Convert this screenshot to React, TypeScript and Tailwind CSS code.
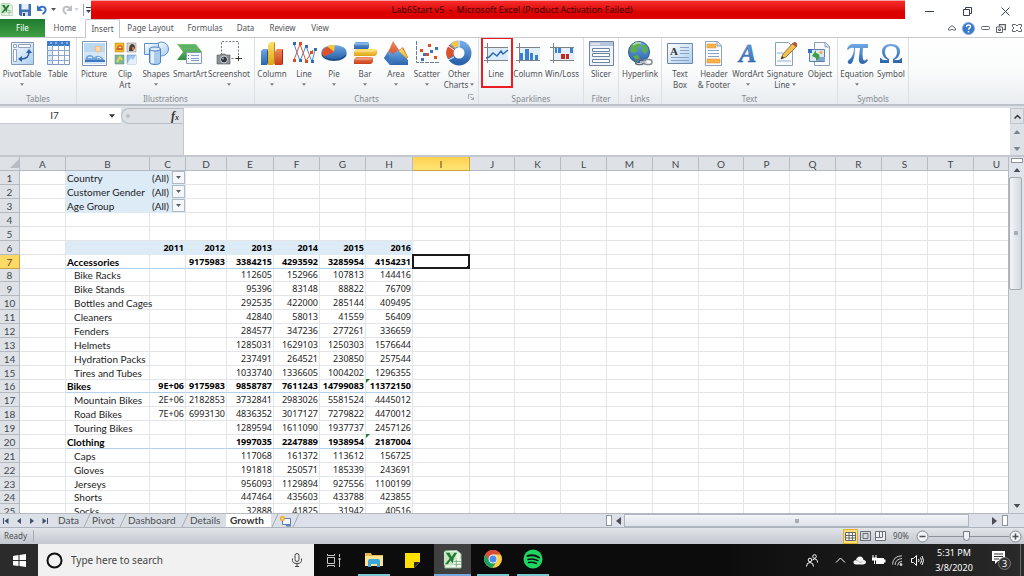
import type { ReactNode } from "react";
import clsx from "clsx";

export default function App() {
  return (
    <div className="flex h-screen min-h-96 flex-col overflow-hidden bg-white font-['Noto_Sans','Open_Sans',sans-serif] text-[8px] text-[#505357]">
      <TitleBar />
      <RibbonTabs />
      <Ribbon />
      <FormulaBar />
      <main className="flex min-h-0 flex-1">
        <div className="min-w-0 flex-1 overflow-hidden">
          <Sheet />
        </div>
        <VerticalScroll />
      </main>
      <SheetTabs />
      <StatusBar />
      <Taskbar />
    </div>
  );
}

function Gradients() {
  return (
    <svg width="0" height="0" className="absolute" aria-hidden="true">
      <defs>
        <linearGradient id="blue" x1="0" y1="0" x2="0" y2="1">
          <stop offset="0" stopColor="#6fa8e4" />
          <stop offset="1" stopColor="#2b64ab" />
        </linearGradient>
        <linearGradient id="red" x1="0" y1="0" x2="0" y2="1">
          <stop offset="0" stopColor="#f08a5e" />
          <stop offset="1" stopColor="#cb3c18" />
        </linearGradient>
        <linearGradient id="gold" x1="0" y1="0" x2="0" y2="1">
          <stop offset="0" stopColor="#ffe066" />
          <stop offset="1" stopColor="#dca416" />
        </linearGradient>
        <linearGradient id="sky" x1="0" y1="0" x2="1" y2="1">
          <stop offset="0" stopColor="#ffffff" />
          <stop offset="1" stopColor="#a9cdf0" />
        </linearGradient>
        <linearGradient id="green" x1="0" y1="0" x2="0" y2="1">
          <stop offset="0" stopColor="#7cc576" />
          <stop offset="1" stopColor="#2f8f3f" />
        </linearGradient>
      </defs>
    </svg>
  );
}

function Caret({ className }: { className?: string }) {
  return (
    <svg width="5" height="3" viewBox="0 0 5 3" className={clsx("shrink-0", className)}>
      <path d="M0 0h5L2.5 3z" fill="currentColor" />
    </svg>
  );
}

function ExcelIcon({ size }: { size: number }) {
  return (
    <svg width={size} height={size} viewBox="0 0 20 20" className="shrink-0">
      <path d="M2 1l12-1 5 4v15H2z" fill="#e9f4e8" stroke="#8cb58c" />
      <path d="M1 2h13v14H1z" fill="#c5e4c0" />
      <path d="M3 3h4l2 4 3-4h3l-4 6 4 6h-4l-3-4-3 4H2l5-6z" fill="#1f7b35" />
      <path d="M11 10h8v8h-9z" fill="#f7fbf6" />
      <path d="M11 12h8M11 15h8M14 10v8" stroke="#74ac72" />
    </svg>
  );
}

function TitleBar() {
  return (
    <header className="flex h-[19px] shrink-0 items-stretch">
      <Gradients />
      <div className="flex w-[91px] items-center">
        <ExcelIcon size={13} />
        <span className="mx-0.5 h-3 w-px bg-gray-400" />
        <button aria-label="Save" className="ml-0.5">
          <svg width="12" height="12" viewBox="0 0 12 12">
            <path d="M0 0h12v12H1.500L0 10.500z" fill="#3f72b5" />
            <path d="M2.500 0h7v5.500h-7z" fill="#e8f1fb" />
            <path d="M3 8h6v4H3z" fill="#d4dbe5" />
            <path d="M4 9h2v3H4z" fill="#2c4e80" />
          </svg>
        </button>
        <button aria-label="Undo" className="ml-1.5">
          <svg width="10" height="11" viewBox="0 0 10 11">
            <path d="M1.500 4.500C5 1 9 3 8.500 6.500Q8 9 5.500 10" fill="none" stroke="#3471c4" strokeWidth="2" />
            <path d="M0 1v6h6z" fill="#3471c4" />
          </svg>
        </button>
        <Caret className="ml-1" />
        <button aria-label="Redo" className="ml-1.5">
          <svg width="10" height="11" viewBox="0 0 10 11">
            <path d="M8.500 4.500C5 1 1 3 1.500 6.500Q2 9 4.500 10" fill="none" stroke="#bcbec1" strokeWidth="2" />
            <path d="M10 1v6H4z" fill="#bcbec1" />
          </svg>
        </button>
        <Caret className="ml-0.5 text-gray-300" />
        <span className="ml-1 h-3 w-px shrink-0 bg-gray-400" />
        <button aria-label="Customize Quick Access Toolbar" className="ml-0.5 text-gray-700">
          <svg width="5" height="6" viewBox="0 0 5 6">
            <path d="M0 0h5v1H0zM0 3h5L2.500 6z" fill="currentColor" />
          </svg>
        </button>
      </div>
      <h1 className="flex flex-1 items-center justify-center whitespace-pre border-t border-[#f5a6a6] bg-linear-to-b from-[#f82a2a] to-[#dc0000] to-60% pl-7 text-[9px] text-[#3a0505]">
        {"Lab6Start v5  -  Microsoft Excel (Product Activation Failed)"}
      </h1>
      <div className="flex w-[119px] items-center justify-between pr-3.5 pl-5 pt-1 text-gray-700">
        <button aria-label="Minimize">
          <svg width="9" height="9" viewBox="0 0 9 9">
            <path d="M0 4.500h9" stroke="currentColor" />
          </svg>
        </button>
        <button aria-label="Restore">
          <svg width="9" height="9" viewBox="0 0 9 9" fill="none" stroke="currentColor">
            <path d="M.5 2.500h6v6h-6zM2.500 2.500v-2h6v6h-2" />
          </svg>
        </button>
        <button aria-label="Close">
          <svg width="9" height="9" viewBox="0 0 9 9">
            <path d="M.5.5l8 8M8.500.5l-8 8" stroke="currentColor" />
          </svg>
        </button>
      </div>
    </header>
  );
}

const ribbonTabs = [
  { name: "Home", width: "w-10" },
  { name: "Insert", width: "w-[35px]" },
  { name: "Page Layout", width: "w-[61px]" },
  { name: "Formulas", width: "w-12" },
  { name: "Data", width: "w-[33px]" },
  { name: "Review", width: "w-[41px]" },
  { name: "View", width: "w-[34px]" },
];

function RibbonTabs() {
  return (
    <nav className="flex h-[19px] shrink-0 items-stretch border-b border-[#c9cdd2]">
      <button className="w-[45px] bg-linear-to-b from-[#1f7a30] to-[#3fa045] text-white">File</button>
      {ribbonTabs.map((tab) => (
        <button
          key={tab.name}
          className={clsx(
            tab.width,
            "whitespace-nowrap",
            tab.name === "Insert" && "-mb-px rounded-t-xs border border-b-0 border-[#c3c7cc] bg-white"
          )}
        >
          {tab.name}
        </button>
      ))}
      <div className="ml-auto flex items-center gap-1.5 pr-0.5">
        <button aria-label="Minimize the Ribbon">
          <svg width="8" height="6" viewBox="0 0 8 6" fill="none" stroke="#5f6368">
            <path d="M.5 3.500L4 .5l3.500 3v1.500h-2L4 4 2.500 5h-2z" />
          </svg>
        </button>
        <button aria-label="Help">
          <svg width="13" height="13" viewBox="0 0 13 13">
            <circle cx="6.500" cy="6.500" r="6" fill="#3a78c9" stroke="#7ea6da" />
            <path d="M4.500 5q0-2 2-2t2 1.700q0 1-1.200 1.600-.8.400-.8 1.400" fill="none" stroke="#fff" strokeWidth="1.400" />
            <path d="M5.700 9h1.600v1.500H5.700z" fill="#fff" />
          </svg>
        </button>
        <button aria-label="Minimize window">
          <svg width="9" height="5" viewBox="0 0 9 5" fill="none" stroke="#5f6368">
            <rect x=".5" y=".5" width="8" height="3" rx="1" />
          </svg>
        </button>
        <button aria-label="Restore window">
          <svg width="10" height="9" viewBox="0 0 10 9" fill="none" stroke="#5f6368">
            <path d="M3.500 2.500v-2h6v5h-2" strokeWidth="1.500" />
            <path d="M.5 3h6v5.500h-6zM2.500 5h2v1.500h-2z" />
          </svg>
        </button>
        <button aria-label="Close window">
          <svg width="10" height="8" viewBox="0 0 10 8" fill="none" stroke="#5f6368">
            <path d="M.5.5h3L5 2 6.500.5h3v2L8 4l1.500 1.500v2h-3L5 6 3.500 7.500h-3v-2L2 4 .5 2.500z" />
          </svg>
        </button>
      </div>
    </nav>
  );
}

type Tool = {
  label: string;
  second?: string;
  menu?: boolean;
  width: string;
  icon: ReactNode;
  marked?: boolean;
};

function Ribbon() {
  return (
    <section className="flex h-[68px] shrink-0 overflow-hidden border-b-2 border-[#bcc2c9] bg-linear-to-b from-white via-[#fafbfb] to-[#e9ecf0]">
      {groups.map((group) => (
        <div key={group.name} className={clsx(group.width, "flex shrink-0 flex-col border-r border-[#dcdfe3]")}>
          <div className="flex flex-1">
            {group.tools.map((tool) => (
              <ToolButton key={tool.label} tool={tool} />
            ))}
          </div>
          <div className="relative text-center leading-[10px] text-[#85898f]">
            {group.name}
            {group.name === "Charts" && (
              <svg width="6" height="6" viewBox="0 0 6 6" className="absolute right-1 bottom-1" fill="none" stroke="#8b9097">
                <path d="M.5 5V.5H5M2.500 2.500l3 3M5.500 3v2.500H3" strokeWidth=".7" />
              </svg>
            )}
          </div>
        </div>
      ))}
    </section>
  );
}

function ToolButton({ tool }: { tool: Tool }) {
  return (
    <button className={clsx(tool.width, "relative flex shrink-0 flex-col items-center pt-0.5")}>
      <svg width="26" height="26" viewBox="0 0 26 26" className="shrink-0">
        {tool.icon}
      </svg>
      <span className="mt-0.5 leading-[11px] whitespace-nowrap">{tool.label}</span>
      {(tool.second || tool.menu) && (
        <span className="flex h-[11px] items-center gap-0.5 leading-[11px] whitespace-nowrap">
          {tool.second}
          {tool.menu && <Caret className="h-[3px] w-1 text-[#777b80]" />}
        </span>
      )}
      {tool.marked && <span className="absolute -top-px right-0 left-0.5 h-[51px] border-2 border-[#ed1c24]" />}
    </button>
  );
}

const sparkAxes = <path d="M1 7.500h24M1 20.500h24M4.500 3v20" stroke="#7d8287" fill="none" />;

const groups: { name: string; width: string; tools: Tool[] }[] = [
  {
    name: "Tables",
    width: "w-[77px]",
    tools: [
      {
        label: "PivotTable",
        menu: true,
        width: "w-11",
        icon: (
          <>
            <path d="M2.500 2.500h22v22h-22z" fill="url(#sky)" stroke="#8499b5" />
            <path d="M4.500 4.500h3v3h-3zM9.500 4.500h12v3h-12zM4.500 9.500h3v12h-3z" fill="#fff" stroke="#8ea4c1" />
            <path d="M12 19Q20 19 20 12" fill="none" stroke="#2d5fa5" strokeWidth="1.500" />
            <path d="M17 13l3-4 3 4zM13 16l-4 3 4 3z" fill="#2d5fa5" />
          </>
        ),
      },
      {
        label: "Table",
        width: "w-7",
        icon: (
          <>
            <path d="M2.500 2.500h22v22h-22z" fill="#fff" stroke="#7d97bd" />
            <path d="M2 1h23v5H2z" fill="#3e7bcb" />
            <path d="M3 7h4v17H3z" fill="#dce9f7" />
            <path d="M2 10.500h23M2 15.500h23M2 20.500h23M7.500 5v20M13.500 5v20M19.500 5v20" stroke="#8ca7cb" />
            <path d="M5 3h2M10 3h2M16 3h2M21 3h2" stroke="#dcecff" />
          </>
        ),
      },
    ],
  },
  {
    name: "Illustrations",
    width: "w-[178px]",
    tools: [
      {
        label: "Picture",
        width: "w-[34px]",
        icon: (
          <>
            <path d="M1.500 1.500h24v24h-24z" fill="#fff" stroke="#7c93b4" />
            <path d="M3 3h21v21H3z" fill="#b9d8f3" />
            <path d="M3 12h21v12H3z" fill="#d6e8f7" />
            <circle cx="17" cy="9" r="3" fill="#ffd9a8" stroke="#f4b77b" />
            <path d="M4 20q1-5 5-5 3 0 4 3 2-3 5-2 4 1 5 4z" fill="#6fa3dd" />
            <path d="M4 20h20v2H4z" fill="#3f78bf" />
            <path d="M7 18q2-2 4 0M16 18q2-2 4 1" stroke="#fff" fill="none" />
          </>
        ),
      },
      {
        label: "Clip",
        second: "Art",
        width: "w-7",
        icon: (
          <>
            <path d="M3 3h9v9H3z" fill="#f5b822" stroke="#a98532" strokeWidth=".5" />
            <path d="M4 9h7M6 6h4v3H6z" stroke="#c9471f" fill="#fbe180" />
            <path d="M15 3h9v9h-9z" fill="#dcd8d2" stroke="#777" strokeWidth=".5" />
            <path d="M17 11q0-7 3-7t3 4l-2 3z" fill="#46403b" />
            <path d="M20 7h2v3h-2z" fill="#e5683c" />
            <path d="M3 15h9v9H3z" fill="#7cb79c" stroke="#64806f" strokeWidth=".5" />
            <path d="M5 22l3-5 2 3" stroke="#e6d84e" strokeWidth="2" fill="none" />
            <path d="M15 15h9v9h-9z" fill="#9cc4ef" stroke="#5c7fab" strokeWidth=".5" />
            <path d="M15 24l4-6 2 2 3-5v9z" fill="#e4f0fb" />
          </>
        ),
      },
      {
        label: "Shapes",
        menu: true,
        width: "w-[34px]",
        icon: (
          <>
            <circle cx="18.500" cy="9" r="7" fill="url(#sky)" stroke="#5b8fce" />
            <path d="M1.500 3.500h14v11h-14z" fill="url(#sky)" stroke="#5b8fce" />
            <path d="M6.500 9v13q0 2.500 5.500 2.500t5.500-2.500V9z" fill="#a9cbed" stroke="#4d83c4" />
            <path d="M8 11h3v12H8z" fill="#e4f0fb" />
            <ellipse cx="12" cy="9" rx="5.500" ry="2" fill="#dbe9f8" stroke="#4d83c4" />
          </>
        ),
      },
      {
        label: "SmartArt",
        width: "w-[34px]",
        icon: (
          <>
            <path d="M0 4h19l6 8-6 8H0l6-8z" fill="url(#green)" />
            <path d="M2 5h16l2 3H5z" fill="#5bb065" />
            <path d="M9.500 12.500h15v11h-15z" fill="#f3f6fa" stroke="#8a9cb5" />
            <path d="M14 15.500h8M14 18.500h8M14 20.500h8" stroke="#87a0c2" />
            <path d="M11 15h1v1h-1zM11 18h1v1h-1z" fill="#3f6fae" />
          </>
        ),
      },
      {
        label: "Screenshot",
        menu: true,
        width: "w-[44px]",
        icon: (
          <>
            <path d="M5.500 15V1.500h17v17H14" fill="none" stroke="#777c82" strokeDasharray="2 1.500" />
            <path d="M20 18.500h6M22.500 16v5" stroke="#333" />
            <path d="M1 15h3l1-1h4l1 1h4v9H1z" fill="#8c8f93" stroke="#55585c" strokeWidth=".6" />
            <circle cx="8" cy="19.500" r="3.500" fill="#30353b" stroke="#d6d8da" />
            <circle cx="7" cy="18.500" r="1" fill="#9eb4cf" />
          </>
        ),
      },
    ],
  },
  {
    name: "Charts",
    width: "w-[224px]",
    tools: [
      {
        label: "Column",
        menu: true,
        width: "w-[34px]",
        icon: (
          <>
            <path d="M2 11l2-2h5l-1 2v14H2z" fill="url(#blue)" />
            <path d="M8 11l1-2v14l-1 2z" fill="#22548f" />
            <path d="M9 5l2-3h5v21l-2 2H9z" fill="url(#gold)" />
            <path d="M15 4l1-2v21l-1 2z" fill="#b98410" />
            <path d="M16 12l2-3h6v14l-1 2h-7z" fill="url(#red)" />
            <path d="M23 11l1-2v14l-1 2z" fill="#9b2a0d" />
          </>
        ),
      },
      {
        label: "Line",
        menu: true,
        width: "w-[30px]",
        icon: (
          <>
            <path d="M3 4l6 17 6-15 6 16 3-12" fill="none" stroke="#4a86cf" />
            <path d="M3 20l6-16 6 17 7-11" fill="none" stroke="#e0572f" />
            <path d="M2 2h3v3H2zM8 19h3v3H8zM14 5h3v3h-3zM20 20h3v3h-3zM23 8h3v3h-3z" fill="#2f6cb9" />
            <path d="M2 19h3v3H2zM8 2h3v3H8zM14 20h3v3h-3zM19 11h3v3h-3z" fill="#dd4b22" />
          </>
        ),
      },
      {
        label: "Pie",
        menu: true,
        width: "w-[30px]",
        icon: (
          <>
            <ellipse cx="13" cy="14" rx="12.500" ry="7" fill="#1f4f8a" />
            <ellipse cx="13" cy="12" rx="12.500" ry="7" fill="url(#blue)" />
            <path d="M13 12L3 16.500Q-1 12 4 8l5-2z" fill="#df5128" />
            <path d="M13 11.500L6 6.500Q9 4.500 14 5z" fill="#f6c83a" />
          </>
        ),
      },
      {
        label: "Bar",
        menu: true,
        width: "w-[32px]",
        icon: (
          <>
            <path d="M2 4l2-2h13v5l-1 2H2z" fill="url(#blue)" />
            <path d="M2 11l2-2h21v5l-2 2H2z" fill="url(#gold)" />
            <path d="M2 19l2-2h17v5l-2 2H2z" fill="url(#red)" />
            <path d="M2 4h14l1-2M2 11h20l3-2M2 19h16l3-2" stroke="#fff" strokeOpacity=".5" fill="none" />
          </>
        ),
      },
      {
        label: "Area",
        menu: true,
        width: "w-[30px]",
        icon: (
          <>
            <path d="M3 17L10 1l6 9 4-3 5 10-3 4H5z" fill="url(#red)" />
            <path d="M11 16l8-8 6 9-6 4z" fill="url(#gold)" />
            <path d="M1 18l4-7 5 3 5-4 10 10v5H7z" fill="url(#blue)" />
            <path d="M1 18l6 7 3-1-5-10z" fill="#3d77c0" />
          </>
        ),
      },
      {
        label: "Scatter",
        menu: true,
        width: "w-[32px]",
        icon: (
          <>
            <path d="M2.500 1v21.500H25" fill="none" stroke="#6d7d92" strokeDasharray="4 1" />
            <path d="M6 9h3v3H6zM12 13h3v3h-3zM14 4h3v3h-3zM20 16h3v3h-3z" fill="#de4f26" />
            <path d="M9 13h3v3H9zM7 18h3v3H7zM16 10h3v3h-3zM21 7h3v3h-3z" fill="#3874c2" />
          </>
        ),
      },
      {
        label: "Other",
        second: "Charts",
        menu: true,
        width: "w-[32px]",
        icon: (
          <>
            <circle cx="13" cy="13" r="9" fill="none" stroke="url(#blue)" strokeWidth="7" />
            <path d="M5 17Q2 12 6 7" fill="none" stroke="#df5128" strokeWidth="7" />
            <path d="M7 6q2-2 5-2.500" fill="none" stroke="#f6c83a" strokeWidth="6" />
            <path d="M13 0v8M2 6l6 4M2 20l6-3" stroke="#fff" />
          </>
        ),
      },
    ],
  },
  {
    name: "Sparklines",
    width: "w-[105px]",
    tools: [
      {
        label: "Line",
        width: "w-[34px]",
        marked: true,
        icon: (
          <>
            <path d="M5 8h20v12H5z" fill="#dcebf9" />
            {sparkAxes}
            <path d="M3 18l3-1 4-4 4 3 4-5 2 3 5-4" fill="none" stroke="#2f6ab5" strokeWidth="1.500" />
          </>
        ),
      },
      {
        label: "Column",
        width: "w-[30px]",
        icon: (
          <>
            <path d="M5 8h20v12H5z" fill="#e3effa" />
            {sparkAxes}
            <path d="M5 13h3v7H5zM10 9h4v11h-4zM15 13h3v7h-3zM20 15h3v5h-3z" fill="#3c80d2" />
          </>
        ),
      },
      {
        label: "Win/Loss",
        width: "w-[38px]",
        icon: (
          <>
            <path d="M5 8h20v12H5z" fill="#e3effa" />
            {sparkAxes}
            <path d="M6 8h2v5H6zM9 8h3v5H9zM21 8h3v5h-3z" fill="#3c80d2" />
            <path d="M12 14h4v5h-4zM17 14h3v5h-3z" fill="#c52a1d" />
          </>
        ),
      },
    ],
  },
  {
    name: "Filter",
    width: "w-[35px]",
    tools: [
      {
        label: "Slicer",
        width: "w-[34px]",
        icon: (
          <>
            <path d="M1.500 1.500h24v24h-24z" fill="#eef3f9" stroke="#71839d" />
            <path d="M2 2h23v4H2z" fill="#b5c5db" />
            <path d="M4.500 8.500h17v3h-17zM4.500 13.500h17v3h-17zM4.500 19.500h17v3h-17z" fill="#fff" stroke="#6c84a6" />
            <path d="M3 4h9" stroke="#fff" />
          </>
        ),
      },
    ],
  },
  {
    name: "Links",
    width: "w-[43px]",
    tools: [
      {
        label: "Hyperlink",
        width: "w-[42px]",
        icon: (
          <>
            <circle cx="12" cy="12" r="10.500" fill="url(#blue)" stroke="#2b5794" />
            <path d="M4 6q5-5 9-4l1 4-4 2 1 3-4 2-4-2zM15 5l4 0 2 5-3 4-3-3zM6 16l5-1 2 4-3 3z" fill="#5fae4c" />
            <path d="M6 5q4-3 8-2" stroke="#fff" strokeOpacity=".6" fill="none" strokeWidth="1.500" />
            <rect x="8.500" y="19.500" width="8" height="5" rx="2.500" fill="none" stroke="#666c73" strokeWidth="1.500" />
            <rect x="17" y="19.500" width="8" height="5" rx="2.500" fill="none" stroke="#858b92" strokeWidth="1.500" />
            <path d="M13 22h7" stroke="#c9cdd1" strokeWidth="1.500" />
          </>
        ),
      },
    ],
  },
  {
    name: "Text",
    width: "w-[176px]",
    tools: [
      {
        label: "Text",
        second: "Box",
        width: "w-9",
        icon: (
          <>
            <path d="M.5 3.500h25v20H.5z" fill="url(#sky)" stroke="#6f86a6" />
            <text x="3" y="15" fontSize="11" fontWeight="bold" fill="#333" className="font-['Liberation_Serif',serif]">
              A
            </text>
            <path d="M13 7.500h9M13 10.500h9M13 13.500h9M4 17.500h18M4 20.500h18" stroke="#8ea3bf" />
          </>
        ),
      },
      {
        label: "Header",
        second: "& Footer",
        width: "w-[32px]",
        icon: (
          <>
            <path d="M4.500 1.500h12l4 4v20h-16z" fill="#fafcff" stroke="#8da3c1" />
            <path d="M16 1.500V6h4.500" fill="#cfdff0" stroke="#8da3c1" />
            <path d="M6 4h9v4H6zM6 19h13v4H6z" fill="#f6b448" stroke="#dd8a2a" strokeWidth=".5" />
            <path d="M7 10.500h11M7 13.500h11M7 16.500h11" stroke="#86a1c6" />
          </>
        ),
      },
      {
        label: "WordArt",
        menu: true,
        width: "w-9",
        icon: (
          <text
            x="4"
            y="22"
            fontSize="26"
            fontStyle="italic"
            fontWeight="bold"
            fill="url(#blue)"
            stroke="#2b62a8"
            strokeWidth=".5"
            className="font-['Liberation_Serif',serif]"
          >
            A
          </text>
        ),
      },
      {
        label: "Signature",
        second: "Line",
        menu: true,
        width: "w-[38px]",
        icon: (
          <>
            <path d="M3.500 2.500h13l4 4v19h-17z" fill="#fbfcfe" stroke="#8fa1ba" />
            <path d="M5 21h14M5 13h6" stroke="#8fb0d8" />
            <path d="M9 19l2-5L21 3l4 3-11 11z" fill="#f0c04e" stroke="#7e6430" strokeWidth=".8" />
            <path d="M20 4l2-2q4 0 3 4l-1 1z" fill="#b3553d" />
            <path d="M9 19l1-3 2 2z" fill="#333" />
          </>
        ),
      },
      {
        label: "Object",
        width: "w-[32px]",
        icon: (
          <>
            <path d="M7.500 2.500h11l4 4v19h-15z" fill="#f8fafd" stroke="#8fa1ba" />
            <path d="M18 2.500V7h4.500" fill="#d5e1ef" stroke="#8fa1ba" />
            <path d="M2.500 9.500h15v12h-15z" fill="#dbe8f6" stroke="#5d7fae" />
            <path d="M1 9h4v4H1z" fill="#3572bf" />
            <circle cx="14" cy="12.500" r="1.700" fill="#f2b24d" />
            <path d="M10 17h8v4h-8z" fill="#7ea6d4" />
            <path d="M5 16l4-6v3q5 1 3 5l-3 3v-3z" fill="#3f9e43" />
          </>
        ),
      },
    ],
  },
  {
    name: "Symbols",
    width: "w-[71px]",
    tools: [
      {
        label: "Equation",
        menu: true,
        width: "w-[38px]",
        icon: (
          <path
            d="M3 9Q5 4 9 4h15v4h-5q-1 6 0 11 1 3 4 0l1 1q-2 4-6 4-4-1-3-7l1-9h-5Q11 17 8 23q-2 2-4 0-1-2 2-4 4-4 4-11-4-1-6 2z"
            fill="url(#blue)"
          />
        ),
      },
      {
        label: "Symbol",
        width: "w-[30px]",
        icon: (
          <path
            d="M2 23v-5h1q1 2 3 2h4q-6-3-6-8Q4 4 13 4t9 8q0 5-6 8h4q2 0 3-2h1v5h-9v-4q4-2 4-7 0-6-6-6t-6 6q0 5 4 7v4z"
            fill="url(#blue)"
          />
        ),
      },
    ],
  },
];

function FormulaBar() {
  return (
    <section className="flex h-[51px] shrink-0 border-b-2 border-[#c3c8cf] bg-[#dee2e7] pt-0.5 text-[#333]">
      <div className="flex h-4 w-[121px] items-center border-b border-[#c3c8cf] bg-white">
        <input
          aria-label="Name Box"
          defaultValue="I7"
          className="w-full min-w-0 bg-transparent text-center font-[Lato,sans-serif] text-[10px] outline-none"
        />
        <button aria-label="Named ranges" className="mr-1.5">
          <Caret className="h-1 w-1.5" />
        </button>
      </div>
      <div className="flex h-4 w-[62px] items-center justify-between rounded-l-full border border-r-0 border-[#b7bdc6] pr-1 pl-1">
        <span className="size-1 rounded-full bg-[#bcc1c8]" />
        <button aria-label="Insert Function" className="font-['Liberation_Serif',serif] text-[12px] font-bold italic">
          f<span className="text-[8px]">x</span>
        </button>
      </div>
      <textarea aria-label="Formula Bar" className="min-w-0 flex-1 resize-none border-l border-[#c3c8cf] bg-white outline-none" />
      <div className="flex w-3.5 flex-col items-center text-[#7a828d]">
        <button aria-label="Collapse Formula Bar" className="flex h-4 w-full items-center justify-center border border-[#c3c8cf] text-[#333]">
          <svg width="7" height="5" viewBox="0 0 7 5">
            <path d="M.5 4.500l3-3 3 3" fill="none" stroke="currentColor" strokeWidth="1.500" />
          </svg>
        </button>
        <div className="flex flex-1 flex-col justify-between pt-1.5 pb-1">
          <Caret className="h-1 w-2 rotate-180" />
          <Caret className="h-1 w-2" />
        </div>
      </div>
    </section>
  );
}

const columns = [
  { name: "A", width: "w-[46px]" },
  { name: "B", width: "w-[84px]" },
  { name: "C", width: "w-[36px]" },
  { name: "D", width: "w-[41px]" },
  { name: "E", width: "w-[47px]" },
  { name: "F", width: "w-[46px]" },
  { name: "G", width: "w-[46px]" },
  { name: "H", width: "w-[47px]" },
  { name: "I", width: "w-[57px]" },
  { name: "J", width: "w-[45px]" },
  { name: "K", width: "w-[46px]" },
  { name: "L", width: "w-[46px]" },
  { name: "M", width: "w-[46px]" },
  { name: "N", width: "w-[46px]" },
  { name: "O", width: "w-[45px]" },
  { name: "P", width: "w-[46px]" },
  { name: "Q", width: "w-[46px]" },
  { name: "R", width: "w-[46px]" },
  { name: "S", width: "w-[46px]" },
  { name: "T", width: "w-[46px]" },
  { name: "U", width: "w-[46px]" },
];

const filters = ["Country", "Customer Gender", "Age Group"];

// label followed by the values of columns C to H
const pivotRows: Record<number, string[]> = {
  6: ["", "2011", "2012", "2013", "2014", "2015", "2016"],
  7: ["Accessories", "", "9175983", "3384215", "4293592", "3285954", "4154231"],
  8: ["Bike Racks", "", "", "112605", "152966", "107813", "144416"],
  9: ["Bike Stands", "", "", "95396", "83148", "88822", "76709"],
  10: ["Bottles and Cages", "", "", "292535", "422000", "285144", "409495"],
  11: ["Cleaners", "", "", "42840", "58013", "41559", "56409"],
  12: ["Fenders", "", "", "284577", "347236", "277261", "336659"],
  13: ["Helmets", "", "", "1285031", "1629103", "1250303", "1576644"],
  14: ["Hydration Packs", "", "", "237491", "264521", "230850", "257544"],
  15: ["Tires and Tubes", "", "", "1033740", "1336605", "1004202", "1296355"],
  16: ["Bikes", "9E+06", "9175983", "9858787", "7611243", "14799083", "11372150"],
  17: ["Mountain Bikes", "2E+06", "2182853", "3732841", "2983026", "5581524", "4445012"],
  18: ["Road Bikes", "7E+06", "6993130", "4836352", "3017127", "7279822", "4470012"],
  19: ["Touring Bikes", "", "", "1289594", "1611090", "1937737", "2457126"],
  20: ["Clothing", "", "", "1997035", "2247889", "1938954", "2187004"],
  21: ["Caps", "", "", "117068", "161372", "113612", "156725"],
  22: ["Gloves", "", "", "191818", "250571", "185339", "243691"],
  23: ["Jerseys", "", "", "956093", "1129894", "927556", "1100199"],
  24: ["Shorts", "", "", "447464", "435603", "433788", "423855"],
  25: ["Socks", "", "", "32888", "41825", "31942", "40516"],
};

const rowNumbers = Array.from({ length: 25 }, (_, i) => i + 1);

function Sheet() {
  return (
    <table className="w-full table-fixed border-separate border-spacing-0 font-[Lato,sans-serif] text-[10px] leading-3 text-[#1c1c1c]">
      <colgroup>
        <col className="w-5" />
        {columns.map((column) => (
          <col key={column.name} className={column.width} />
        ))}
      </colgroup>
      <thead>
        <tr className="h-3.5">
          <th className="border-r border-b border-[#b5bac2] bg-[#dee2e7] p-0">
            <svg width="9" height="9" viewBox="0 0 9 9" className="ml-auto">
              <path d="M9 0v9H0z" fill="#b8bcc3" />
            </svg>
          </th>
          {columns.map((column) => (
            <th
              key={column.name}
              className={clsx(
                "border-r border-b p-0 text-center font-normal",
                column.name === "I"
                  ? "border-[#c9a340] bg-linear-to-b from-[#ffd04f] to-[#ffe576] text-[#54481f]"
                  : "border-[#b5bac2] bg-[#dee2e7] text-[#44484d]"
              )}
            >
              {column.name}
            </th>
          ))}
        </tr>
      </thead>
      <tbody>
        {rowNumbers.map((row) => (
          <SheetRow key={row} row={row} />
        ))}
      </tbody>
    </table>
  );
}

function SheetRow({ row }: { row: number }) {
  const values = pivotRows[row];
  const heading = row === 6;
  const total = row === 7 || row === 16 || row === 20;

  return (
    <tr className={row % 8 === 0 ? "h-[13px]" : "h-3.5"}>
      <th
        className={clsx(
          "border-r border-b p-0 text-center font-normal",
          row === 7 ? "border-[#c9a340] bg-[#ffd965] text-[#54481f]" : "border-[#b5bac2] bg-[#dee2e7] text-[#44484d]"
        )}
      >
        {row}
      </th>
      {columns.map((column, index) => {
        const filter = row <= filters.length && (index === 1 || index === 2);
        const inPivot = index >= 1 && index <= 7;
        const text = values && inPivot ? values[index - 1] : "";
        return (
          <td
            key={column.name}
            className={clsx(
              "relative border-r border-b p-0 whitespace-nowrap",
              filter || (heading && inPivot)
                ? "border-[#ddebf7] bg-[#ddebf7]"
                : total && inPivot
                  ? "border-r-[#e3e5e8] border-b-[#b4d2ee]"
                  : "border-[#e3e5e8]",
              (heading || total) && "font-bold text-black",
              index === 1 && (total || filter ? "pl-px text-left" : "pl-2 text-left"),
              index > 1 && !filter && "pr-px text-right font-['Noto_Sans',sans-serif] text-[9px]"
            )}
          >
            {filter && index === 1 && <label htmlFor={`filter-${row}`}>{filters[row - 1]}</label>}
            {filter && index === 2 && <FilterSelect id={`filter-${row}`} />}
            {text}
            {index === 7 && (row === 16 || row === 20) && (
              <svg width="4" height="4" viewBox="0 0 4 4" className="absolute -top-px left-0">
                <path d="M0 0h4L0 4z" fill="#1e7b2e" />
              </svg>
            )}
            {row === 7 && column.name === "I" && (
              <span className="absolute -inset-px z-10 border-2 border-[#1a1a1a]">
                <span className="absolute -right-0.5 -bottom-0.5 size-[3px] bg-[#1a1a1a]" />
              </span>
            )}
          </td>
        );
      })}
    </tr>
  );
}

function FilterSelect({ id }: { id: string }) {
  return (
    <div className="flex h-[13px] items-center">
      <select id={id} className="h-3 min-w-0 flex-1 appearance-none bg-transparent pl-0.5 leading-3">
        <option>(All)</option>
      </select>
      <span className="pointer-events-none flex h-[13px] w-[13px] items-center justify-center border border-[#b3b9c2] bg-[#f5f7fa] text-[#5a5f66]">
        <Caret />
      </span>
    </div>
  );
}

function VerticalScroll() {
  return (
    <div className="flex w-4 shrink-0 flex-col items-center border-l border-[#b5bac2] bg-[#dfe4ea] text-[#4a4e54]">
      <span className="mt-px h-[5px] w-3 border border-[#8f959d] bg-white" />
      <button aria-label="Scroll up" className="flex h-3.5 items-center">
        <Caret className="h-1 w-2 rotate-180" />
      </button>
      <div className="w-full flex-1 pr-0.5">
        <div className="flex h-[35%] w-full items-center justify-center rounded-xs border border-[#a4abb5] bg-linear-to-r from-[#f3f5f8] to-[#d3d9e1]">
          <span className="size-1 bg-[#a7adb6]" />
        </div>
      </div>
      <button aria-label="Scroll down" className="flex h-3.5 items-center">
        <Caret className="h-1 w-2" />
      </button>
    </div>
  );
}

const sheetTabs = [
  { name: "Data", width: "w-[34px]" },
  { name: "Pivot", width: "w-9" },
  { name: "Dashboard", width: "w-[62px]" },
  { name: "Details", width: "w-[37px]" },
  { name: "Growth", width: "w-[45px]" },
];

function SheetTabs() {
  return (
    <section className="flex h-3.5 shrink-0 border-t border-[#b5bac2] bg-[#dce0e8] text-[#4a4e54]">
      <div className="flex w-[57px] items-center justify-around pr-1.5 text-[#3f5068]">
        <button aria-label="First sheet">
          <svg width="6" height="6" viewBox="0 0 6 6">
            <path d="M0 0h1v6H0zM5.500 0v6L1.500 3z" fill="currentColor" />
          </svg>
        </button>
        <button aria-label="Previous sheet">
          <svg width="6" height="6" viewBox="0 0 6 6">
            <path d="M5 0v6L1 3z" fill="currentColor" />
          </svg>
        </button>
        <button aria-label="Next sheet">
          <svg width="6" height="6" viewBox="0 0 6 6">
            <path d="M1 0v6l4-3z" fill="currentColor" />
          </svg>
        </button>
        <button aria-label="Last sheet">
          <svg width="6" height="6" viewBox="0 0 6 6">
            <path d="M5 0h1v6H5zM.5 0v6l4-3z" fill="currentColor" />
          </svg>
        </button>
      </div>
      {sheetTabs.map((tab) => (
        <button
          key={tab.name}
          className={clsx(
            tab.width,
            "flex justify-between font-[Lato,sans-serif] text-[10px] leading-3",
            tab.name === "Growth" ? "bg-white pl-1 font-bold text-[#333]" : "bg-[#d9dde4] pl-px"
          )}
        >
          {tab.name}
          {tab.name !== "Details" && tab.name !== "Growth" && <Slant />}
        </button>
      ))}
      <button aria-label="Insert Worksheet" className="flex items-center">
        <Slant />
        <svg width="13" height="12" viewBox="0 0 13 12">
          <path d="M3.500 3.500h8v6h-8z" fill="#f5f9fe" stroke="#5b7fb3" />
          <path d="M7 10h5v1.500H7z" fill="#5b7fb3" />
          <circle cx="3.500" cy="3.500" r="2.500" fill="#f5a623" />
          <circle cx="3.500" cy="3.500" r="1" fill="#fff3c4" />
        </svg>
        <Slant />
      </button>
      <div className="ml-auto flex w-[418px] items-center">
        <span className="h-[11px] w-1.5 border border-[#8f959d] bg-white" />
        <button aria-label="Scroll left" className="flex w-3 justify-center">
          <svg width="5" height="8" viewBox="0 0 5 8">
            <path d="M5 0v8L0 4z" fill="currentColor" />
          </svg>
        </button>
        <div className="h-full flex-1 pr-[17px]">
          <div className="flex h-full items-center justify-center border border-[#b0b6bf] bg-linear-to-b from-[#f3f5f8] to-[#dde2e9]">
            <span className="size-1 bg-[#a7adb6]" />
          </div>
        </div>
        <button aria-label="Scroll right" className="flex w-4 justify-center">
          <svg width="5" height="8" viewBox="0 0 5 8">
            <path d="M0 0v8l5-4z" fill="currentColor" />
          </svg>
        </button>
        <span className="mr-4 h-[11px] w-1.5 border border-[#8f959d] bg-white" />
      </div>
    </section>
  );
}

function Slant() {
  return (
    <svg width="8" height="13" viewBox="0 0 8 13" className="shrink-0">
      <path d="M1 13L7 0" stroke="#a5abb4" />
    </svg>
  );
}

function StatusBar() {
  return (
    <footer className="flex h-[17px] shrink-0 items-center border-t border-[#aeb4bb] bg-linear-to-b from-[#e2e5e9] to-[#c3c8ce] pl-1 text-[#4d5156]">
      <span className="mr-auto border-r border-[#a9afb7] pr-1.5 leading-3">Ready</span>
      <div className="flex items-center">
        <button aria-label="Normal" className="flex h-[15px] w-[15px] items-center justify-center border border-[#e0b030] bg-[#ffe07a]">
          <svg width="11" height="9" viewBox="0 0 11 9" fill="#fff" stroke="#666">
            <path d="M.5.5h10v8H.5zM.5 3.500h10M.5 6h10M4 .5v8M7.500.5v8" />
          </svg>
        </button>
        <button aria-label="Page Layout" className="ml-0.5">
          <svg width="11" height="10" viewBox="0 0 11 10" fill="#d5d9de" stroke="#6a6f76">
            <path d="M.5.500h10v9H.5zM3 2.500h5v5H3z" />
          </svg>
        </button>
        <button aria-label="Page Break Preview" className="ml-1">
          <svg width="11" height="10" viewBox="0 0 11 10" fill="#eef0f3" stroke="#6a6f76">
            <path d="M.5.500h10v9H.5zM4.500.5v6M7.500.5v6h-7" />
          </svg>
        </button>
        <span className="w-[30px] text-center">90%</span>
        <ZoomButton label="Zoom out" path="M3.500 6.500h6" />
        <input
          type="range"
          aria-label="Zoom"
          defaultValue="46"
          className="h-3 w-20 appearance-none bg-[linear-gradient(#8d939b,#8d939b)] bg-size-[100%_1px] bg-center bg-no-repeat [&::-webkit-slider-thumb]:h-2.5 [&::-webkit-slider-thumb]:w-[7px] [&::-webkit-slider-thumb]:appearance-none [&::-webkit-slider-thumb]:rounded-b-sm [&::-webkit-slider-thumb]:border [&::-webkit-slider-thumb]:border-[#767c84] [&::-webkit-slider-thumb]:bg-[#eef0f3]"
        />
        <ZoomButton label="Zoom in" path="M3.500 6.500h6M6.500 3.500v6" />
      </div>
      <span className="w-0.5" />
    </footer>
  );
}

function ZoomButton({ label, path }: { label: string; path: string }) {
  return (
    <button aria-label={label}>
      <svg width="13" height="13" viewBox="0 0 13 13">
        <circle cx="6.500" cy="6.500" r="5.500" fill="#f2f4f6" stroke="#80868e" />
        <path d={path} stroke="#4d5156" strokeWidth="1.500" />
      </svg>
    </button>
  );
}

function Taskbar() {
  return (
    <footer className="flex h-8 shrink-0 bg-linear-to-r from-[#0c0c0c] from-70% to-[#2a2a2a] text-white">
      <button aria-label="Start" className="flex w-[38px] items-center justify-center bg-[#2b2b2b]">
        <svg width="13" height="13" viewBox="0 0 13 13">
          <path d="M0 2l5.500-1v5H0zM6.500 1L13 0v6H6.500zM0 7h5.500v5L0 11.200zM6.500 7H13v6l-6.500-1z" fill="#fff" />
        </svg>
      </button>
      <div className="flex w-[276px] items-center bg-[#f1f1f1] pr-3 pl-2">
        <svg width="17" height="17" viewBox="0 0 17 17" className="shrink-0">
          <circle cx="8.500" cy="8.500" r="7" fill="none" stroke="#111" strokeWidth="2" />
        </svg>
        <input
          aria-label="Type here to search"
          placeholder="Type here to search"
          className="ml-2 min-w-0 flex-1 bg-transparent text-[10px] text-[#444] outline-none placeholder:text-[#444]"
        />
        <svg width="10" height="14" viewBox="0 0 10 14" fill="none" stroke="#444">
          <rect x="3" y=".5" width="4" height="8" rx="2" />
          <path d="M.5 5.500v2q0 3 4.500 3t4.500-3v-2M5 10.500V13M3 13.500h4" />
        </svg>
      </div>
      <TaskButton label="Task View" className="w-[38px]">
        <svg width="15" height="13" viewBox="0 0 15 13" fill="none" stroke="#c9c9c9">
          <path d="M1.500 3.500h7v6h-7zM1.500 0v1.500h7V0M1.500 13v-1.500h7V13M13.500 0v3M13.500 6v7" />
          <path d="M12.500 4h2v2h-2z" fill="#c9c9c9" stroke="none" />
        </svg>
      </TaskButton>
      <TaskButton label="File Explorer" className="ml-1.5 w-8 border-b-2 border-[#7cc9d4]">
        <svg width="18" height="15" viewBox="0 0 18 15">
          <path d="M0 1h6l1 2h11v11H0z" fill="#e8b84c" />
          <path d="M0 4h18v10H0z" fill="#fde394" />
          <path d="M3 15V9q0-2 2-2h8q2 0 2 2v6h-3v-3H6v3z" fill="#3ba7dd" />
        </svg>
      </TaskButton>
      <TaskButton label="Sticky Notes" className="ml-1.5 w-8">
        <svg width="15" height="15" viewBox="0 0 15 15">
          <path d="M0 0h15v9l-6 6H0z" fill="#ffe000" />
          <path d="M9 15V9h6z" fill="#2b2b2b" />
        </svg>
      </TaskButton>
      <TaskButton label="Excel" className="ml-1.5 w-[37px] border-b-2 border-[#77a9de] bg-[#3f3f3f]">
        <ExcelIcon size={19} />
      </TaskButton>
      <TaskButton label="Chrome" className="ml-1.5 w-8 border-b-2 border-[#7cc9d4]">
        <svg width="18" height="18" viewBox="0 0 18 18">
          <circle cx="9" cy="9" r="9" fill="#ffcd40" />
          <path d="M1.200 4.500A9 9 0 0 1 16.800 4.500H9L5 11z" fill="#de4c3c" />
          <path d="M1.200 4.500A9 9 0 0 0 8.500 18l4-6.500H6z" fill="#1fa05f" />
          <circle cx="9" cy="9" r="4.500" fill="#f1f1f1" />
          <circle cx="9" cy="9" r="3.500" fill="#4c8bf5" />
        </svg>
      </TaskButton>
      <TaskButton label="Spotify" className="ml-2 w-8 border-b-2 border-[#7cc9d4]">
        <svg width="20" height="20" viewBox="0 0 20 20">
          <circle cx="10" cy="10" r="9.500" fill="#1ed760" />
          <path d="M4.500 7q6-2 11.500 1.500" fill="none" stroke="#111" strokeWidth="2" strokeLinecap="round" />
          <path d="M5 10.500q5-1.500 10 1.200M5.500 13.500q4-1 8 1" fill="none" stroke="#111" strokeWidth="1.500" strokeLinecap="round" />
        </svg>
      </TaskButton>

      <TaskButton label="People" className="ml-auto w-9">
        <svg width="12" height="13" viewBox="0 0 12 13" fill="none" stroke="#fff">
          <circle cx="4" cy="6" r="1.800" />
          <circle cx="8.500" cy="2.500" r="1.800" />
          <path d="M.5 12.500q0-4 3.500-4t3.500 4M6.500 6q2-2 4-.5 1 1 1 3" />
        </svg>
      </TaskButton>
      <TaskButton label="Show hidden icons" className="w-5">
        <svg width="11" height="6" viewBox="0 0 11 6" fill="none" stroke="#fff">
          <path d="M1 5.500l4.500-4.500L10 5.500" />
        </svg>
      </TaskButton>
      <TaskButton label="OneDrive" className="w-[19px]">
        <svg width="13" height="9" viewBox="0 0 13 9">
          <path d="M3 8.500Q0 8 .5 5.500 1 4 3 4q1-3.500 4-3.500T10.500 4Q13 4 13 6.500 12.500 8.500 10 8.500z" fill="#f4f4f4" />
          <path d="M2 4.500q3-1 5 2l3-1" fill="none" stroke="#bbb" />
        </svg>
      </TaskButton>
      <TaskButton label="Battery" className="w-[19px]">
        <svg width="14" height="10" viewBox="0 0 14 10">
          <path d="M4 3h8v1.500h1.500v3H12V9H4z" fill="#fff" />
          <path d="M1 0v3M4 0v3M0 3h5v2H0zM2.500 5v4" stroke="#fff" fill="#fff" />
        </svg>
      </TaskButton>
      <TaskButton label="Network" className="w-[19px]">
        <svg width="11" height="11" viewBox="0 0 11 11" fill="none" stroke="#cfcfcf">
          <path d="M.5 9.500Q1 1 10 .8M3 10q.5-6 7-6.500M5.500 10.500q.5-4 4.500-4.300" />
          <circle cx="9" cy="9.500" r="1" fill="#fff" />
        </svg>
      </TaskButton>
      <TaskButton label="Volume" className="w-5">
        <svg width="13" height="11" viewBox="0 0 13 11" fill="none" stroke="#fff">
          <path d="M.5 3.500h2l3-3v10l-3-3h-2zM7.500 4q1 1.500 0 3M9.500 2.500q2 3 0 6M11 1q3 4.500 0 9" />
        </svg>
      </TaskButton>
      <div className="flex w-[54px] flex-col items-center justify-center text-[9px] leading-[15px]">
        <time>5:31 PM</time>
        <time>3/8/2020</time>
      </div>
      <TaskButton label="Notifications" className="w-10 border-r border-[#6a6a6a]">
        <svg width="20" height="20" viewBox="0 0 20 20">
          <path d="M1 1h13v10H7l-3 3v-3H1z" fill="#fff" />
          <path d="M3 4h9M3 6.500h9M3 9h5" stroke="#333" />
          <circle cx="13.500" cy="13.500" r="6" fill="#333" stroke="#777" />
          <text x="11" y="17" fontSize="9" fill="#fff">
            3
          </text>
        </svg>
      </TaskButton>
      <span className="w-[3px]" />
    </footer>
  );
}

function TaskButton({ label, className, children }: { label: string; className: string; children: ReactNode }) {
  return (
    <button aria-label={label} className={clsx("flex shrink-0 items-center justify-center", className)}>
      {children}
    </button>
  );
}
